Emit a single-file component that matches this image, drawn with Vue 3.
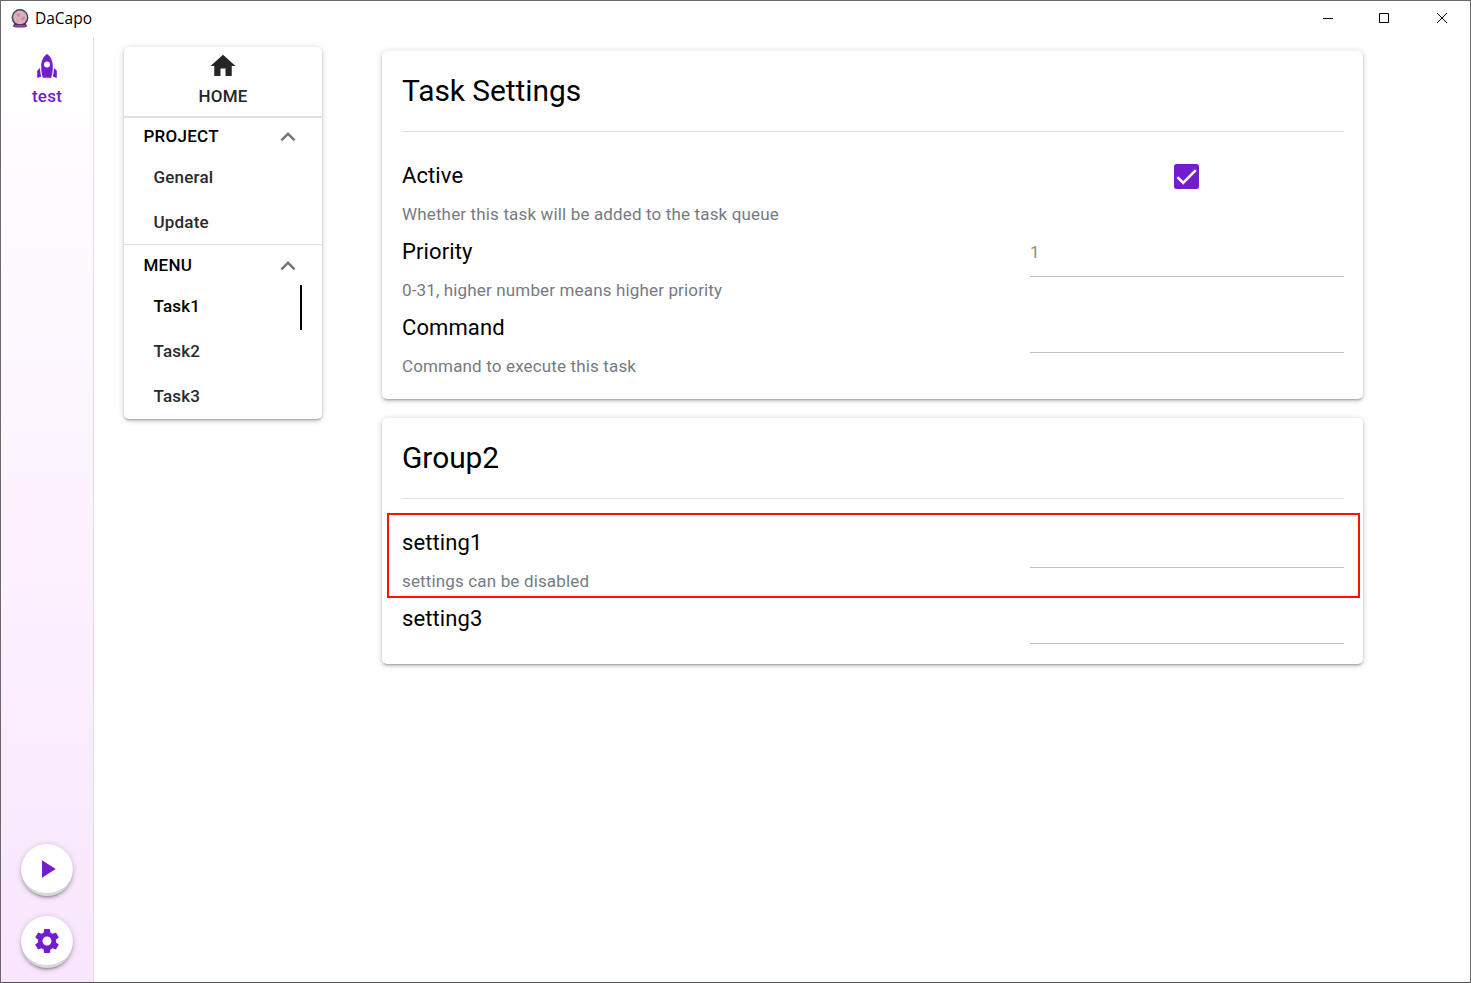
<script setup>
const sections = [
  { title: 'PROJECT', items: [{ name: 'General' }, { name: 'Update' }] },
  { title: 'MENU', items: [{ name: 'Task1', active: true }, { name: 'Task2' }, { name: 'Task3' }] },
]
const groups = [
  {
    title: 'Task Settings',
    rows: [
      { name: 'Active', help: 'Whether this task will be added to the task queue', type: 'check' },
      { name: 'Priority', help: '0-31, higher number means higher priority', value: '1' },
      { name: 'Command', help: 'Command to execute this task' },
    ],
  },
  {
    title: 'Group2',
    rows: [
      { name: 'setting1', help: 'settings can be disabled', marked: true },
      { name: 'setting3' },
    ],
  },
]
</script>

<template>
  <div class="window">
    <header class="titlebar">
      <svg class="logo" width="18" height="19" viewBox="0 0 18 19">
        <path d="M1.500 17.200C2.500 15 5 13.500 9 13.500s6.500 1.500 7.500 3.700l-3 1.300h-9z" fill="#6d3a86" />
        <circle cx="9" cy="8.500" r="8.400" fill="#45426b" />
        <circle cx="9" cy="8.300" r="6.900" fill="#dcaeb8" />
        <path d="M5 5.500l3-1.500 1.500 2-2 2zM10 9l3-2 1 3-3 2zM5 10l2 .5.5 2z" fill="#c8909f" />
        <path d="M2.500 13.500c3 2.600 10 2.600 13 0l-1.500 3H4z" fill="#4a2d68" />
        <path d="M4 16.800h10" stroke="#a94fb0" stroke-width="1" />
      </svg>
      <span class="app-name">DaCapo</span>
      <div class="controls">
        <svg width="10" height="10" viewBox="0 0 10 10"><path d="M0 5.500h10" /></svg>
        <svg width="10" height="10" viewBox="0 0 10 10"><path d="M.5.5h9v9h-9z" /></svg>
        <svg width="10" height="10" viewBox="0 0 10 10"><path d="M0 0l10 10M10 0L0 10" /></svg>
      </div>
    </header>

    <div class="body">
      <aside class="rail">
        <div class="instance">
          <svg width="20" height="24" viewBox="0 0 20 24">
            <path fill-rule="evenodd" d="M10 0C6.400 2.200 4.200 7 4.200 12.500c0 4.400.6 7.700 1.500 11.200h8.600c.9-3.500 1.500-6.800 1.500-11.200C15.800 7 13.600 2.200 10 0zm0 7.400a3 3 0 1 1 0 6 3 3 0 0 1 0-6z" />
            <path d="M3 14L.2 16.700V24l4-1.400C3.500 20 3.100 17 3 14zM17 14l2.800 2.700V24l-4-1.400c.7-2.600 1.100-5.600 1.200-8.600z" />
          </svg>
          <span>test</span>
        </div>
        <div class="fabs">
          <button class="fab">
            <svg width="30" height="30" viewBox="0 0 24 24"><path d="M8 5v14l11-7z" /></svg>
          </button>
          <button class="fab">
            <svg width="30" height="30" viewBox="0 0 24 24"><path d="M19.140 12.940c.04-.3.060-.61.060-.94 0-.32-.02-.64-.07-.94l2.030-1.580c.18-.14.230-.41.120-.61l-1.920-3.320c-.12-.22-.37-.29-.59-.22l-2.390.96c-.5-.38-1.030-.7-1.620-.94l-.36-2.540c-.04-.24-.24-.41-.48-.41h-3.840c-.24 0-.43.170-.47.410l-.36 2.540c-.59.240-1.130.570-1.620.940l-2.390-.96c-.22-.08-.47 0-.59.220L2.740 8.870c-.12.210-.08.470.120.610l2.030 1.580c-.05.300-.09.630-.09.940s.02.640.070.940l-2.030 1.580c-.18.140-.23.410-.12.610l1.920 3.320c.12.220.370.290.590.220l2.390-.96c.5.380 1.030.700 1.620.940l.36 2.540c.05.240.240.410.480.410h3.840c.24 0 .440-.17.470-.41l.36-2.540c.59-.24 1.130-.56 1.620-.94l2.390.96c.22.080.470 0 .590-.22l1.920-3.320c.12-.22.070-.47-.12-.61l-2.010-1.580zM12 15.600c-1.980 0-3.600-1.620-3.600-3.600s1.620-3.600 3.600-3.600 3.600 1.620 3.600 3.600-1.620 3.600-3.600 3.600z" /></svg>
          </button>
        </div>
      </aside>

      <nav class="menu card">
        <div class="home">
          <svg width="30" height="30" viewBox="0 0 24 24"><path d="M10 20v-6h4v6h5v-8h3L12 3 2 12h3v8z" /></svg>
          <span>HOME</span>
        </div>
        <section v-for="s in sections" :key="s.title" class="section">
          <div class="section-head">
            <span>{{ s.title }}</span>
            <svg width="30" height="30" viewBox="0 0 24 24"><path d="M12 8l-6 6 1.410 1.410L12 10.830l4.590 4.580L18 14z" /></svg>
          </div>
          <div v-for="i in s.items" :key="i.name" class="item" :class="{ active: i.active }">{{ i.name }}</div>
        </section>
      </nav>

      <main class="content">
        <section v-for="g in groups" :key="g.title" class="card group">
          <h2>{{ g.title }}</h2>
          <div class="rows">
            <div v-for="r in g.rows" :key="r.name" class="row" :class="{ marked: r.marked }">
              <div class="name">{{ r.name }}</div>
              <div v-if="r.type === 'check'" class="check">
                <svg width="25" height="25" viewBox="0 0 25 25">
                  <rect width="25" height="25" rx="2.500" />
                  <path d="M3.500 13.200l5.600 5.600L21.800 6.100" />
                </svg>
              </div>
              <div v-else class="field">{{ r.value }}</div>
              <div v-if="r.help" class="help">{{ r.help }}</div>
            </div>
          </div>
        </section>
      </main>
    </div>
  </div>
</template>

<style>
body { margin: 0; overflow: hidden; }
</style>

<style scoped>
* { box-sizing: border-box; }
.window {
  width: 1471px;
  height: 983px;
  display: flex;
  flex-direction: column;
  border: 1px solid #6b6869;
  border-bottom-color: #555152;
  background: #fff;
  color: #000;
  font-family: Roboto, "Liberation Sans", sans-serif;
  font-size: 17px;
}
.titlebar { height: 36px; flex: none; display: flex; align-items: center; padding: 0 23px 2px 10px; }
.app-name { font-family: "Open Sans", "Noto Sans", sans-serif; font-size: 15.5px; margin-left: 6px; }
.controls { margin-left: auto; display: flex; }
.controls svg { margin-left: 46px; fill: none; stroke: #000; stroke-width: 1; }
.controls svg:last-child { margin-left: 48px; }
.body { flex: 1; min-height: 0; display: flex; align-items: flex-start; }
.rail {
  width: 93px;
  height: 100%;
  display: flex;
  flex-direction: column;
  justify-content: space-between;
  align-items: center;
  padding: 17px 0 14px;
  border-right: 1px solid #e0e0e0;
  background: linear-gradient(#fff, #f9e6fe);
}
.instance { display: flex; flex-direction: column; align-items: center; color: #731dcf; font-weight: 500; }
.instance svg { fill: #731dcf; }
.instance span { line-height: 26px; margin-top: 5px; letter-spacing: .25px; }
.fabs { display: flex; flex-direction: column; gap: 20px; }
.fab {
  width: 52px;
  height: 52px;
  padding: 1px 0 0;
  display: flex;
  align-items: center;
  justify-content: center;
  border: 0;
  border-bottom: 3px solid rgba(0, 0, 0, .15);
  border-radius: 50%;
  background: #fff;
  box-shadow: 0 1px 6px rgba(0, 0, 0, .2), 0 2.500px 2.500px rgba(0, 0, 0, .14), 0 4px 1px -2.500px rgba(0, 0, 0, .12);
}
.fab svg { fill: #731dcf; }
.card {
  background: #fff;
  border-radius: 5px;
  box-shadow: 0 1px 6px rgba(0, 0, 0, .2), 0 2px 2.500px rgba(0, 0, 0, .14), 0 3px 1px -2.500px rgba(0, 0, 0, .12);
}
.menu { width: 198px; height: 372px; margin: 10px 0 0 30px; font-weight: 500; }
.home {
  height: 71px;
  display: flex;
  flex-direction: column;
  align-items: center;
  padding-top: 4px;
  border-bottom: 2px solid #e0e0e0;
  color: #262626;
}
.home svg { fill: #262626; }
.home span { line-height: 30px; letter-spacing: .2px; }
.section-head { height: 37px; display: flex; align-items: center; justify-content: space-between; padding: 0 19px 0 19.500px; letter-spacing: .25px; }
.section-head span { padding-bottom: 2px; }
.section-head svg { fill: #757575; }
.section + .section { border-top: 1px solid #e0e0e0; }
.section + .section .section-head { height: 40px; }
.section + .section .section-head span { padding-bottom: 0; }
.section + .section .section-head svg { margin-top: 2px; }
.section:nth-of-type(1) .item:last-child { height: 44px; }
.item { height: 45px; line-height: 45px; padding-left: 29.500px; margin-right: 20px; color: #2a2a2a; letter-spacing: .2px; }
.section + .section .item { line-height: 43px; }
.item.active { color: #000; border-right: 2px solid #000; }
.content { margin: 14px 0 0 60px; display: flex; flex-direction: column; gap: 19px; }
.group { width: 981px; padding: 20px 19px 20px 20px; }
h2 { margin: 0; font-size: 29.900px; font-weight: 400; line-height: 40px; padding-bottom: 20px; border-bottom: 1px solid #e0e0e0; letter-spacing: -.03px; }
.rows { padding-top: 19px; }
.row { display: grid; grid-template-columns: 628px 314px; grid-template-rows: 50px auto; position: relative; }
.name { font-size: 22px; line-height: 49px; letter-spacing: .1px; }
.field { border-bottom: 1px solid #c2c2c2; color: #8c8c8c; line-height: 50px; }
.check { display: flex; align-items: center; justify-content: center; padding-right: 2px; }
.check rect { fill: #731dcf; }
.check path { fill: none; stroke: #fff; stroke-width: 2.600; }
.help { height: 26px; line-height: 26px; color: #757b82; letter-spacing: .15px; }
.marked::after { content: ""; position: absolute; inset: -5px -16px -4px -15px; border: 2px solid #ff1100; }
</style>
